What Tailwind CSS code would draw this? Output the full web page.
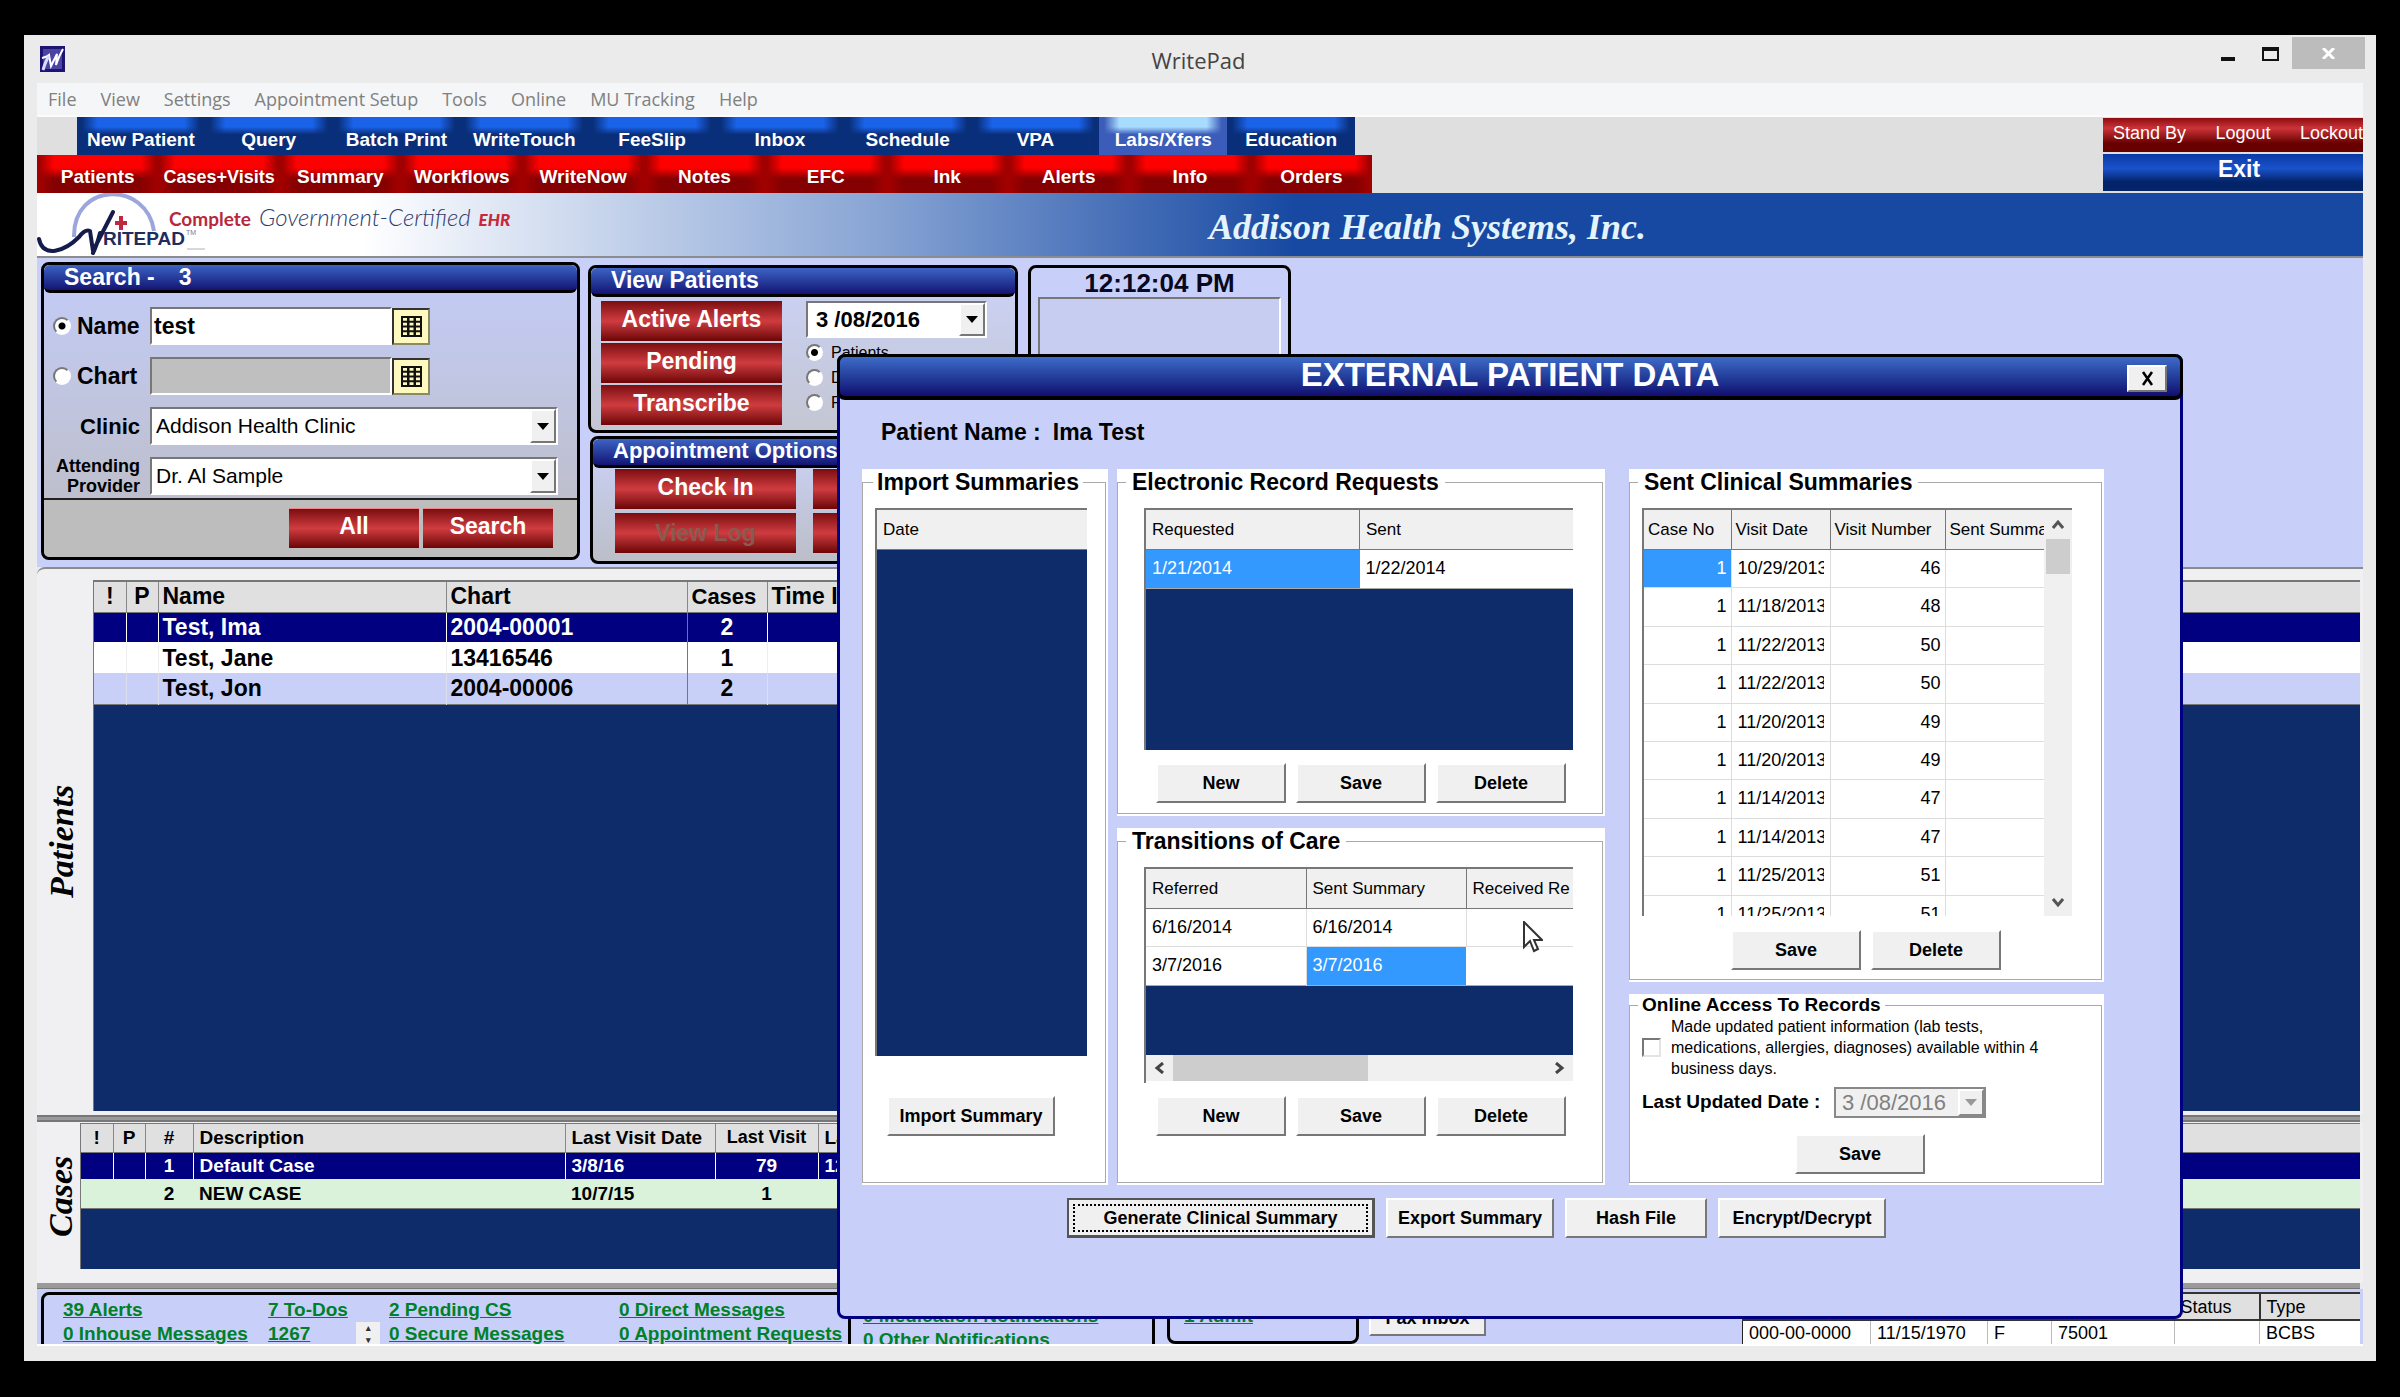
<!DOCTYPE html>
<html lang="en">
<head>
    <meta charset="UTF-8">
    <meta name="viewport" content="width=device-width, initial-scale=1.0">
    <script src="https://cdn.jsdelivr.net/npm/@tailwindcss/browser@4"></script>
    <title>WritePad</title>
</head>
<body class="bg-black font-['Liberation_Sans',sans-serif]">
<div class="h-screen min-h-[1397px] bg-black pl-6 pr-6 pt-[35px] pb-9 overflow-hidden">
<div class="relative h-full bg-[#ebebeb] flex flex-col px-[13px] pb-[15px]">

    <!-- title bar -->
    <header class="h-12 shrink-0 flex justify-between items-start -mr-0.5">
        <div class="flex-1 pl-[3px] pt-[11px]">
            <svg class="w-[25px] h-[26px]" viewBox="0 0 25 26">
                <rect width="25" height="26" fill="#1c1470"/>
                <rect x="3" y="3" width="19" height="20" fill="#4a44a4"/>
                <path d="M2 12 Q7 11 9 9 L11 20 L17 8 L16 19 Q19 10 23 3" fill="none" stroke="#fff" stroke-width="2"/>
                <path d="M3 24 Q6 14 9 10" fill="none" stroke="#dcdcff" stroke-width="3"/>
            </svg>
        </div>
        <h1 class="h-12 flex items-center text-[22px] text-[#444] font-['Open_Sans',sans-serif] pt-0.5 pr-2">WritePad</h1>
        <div class="flex-1 flex justify-end pt-0.5">
            <button aria-label="Minimize" class="w-10 h-8 flex justify-center items-end pb-2"><svg class="w-[14px] h-[4px]"><rect width="14" height="4" fill="#111"/></svg></button>
            <button aria-label="Maximize" class="w-11 h-8 flex justify-center items-end pb-2"><svg class="w-[17px] h-[14px]" viewBox="0 0 17 14"><rect x="1" y="1" width="15" height="12" fill="none" stroke="#111" stroke-width="2"/><rect width="17" height="4" fill="#111"/></svg></button>
            <button aria-label="Close" class="w-[73px] h-8 bg-[#bcbcbc] flex justify-center items-center"><svg class="w-[13px] h-[11px]" viewBox="0 0 13 11"><path d="M1 0 L12 11 M12 0 L1 11" stroke="#fff" stroke-width="3"/></svg></button>
        </div>
    </header>

    <!-- menu -->
    <nav class="h-[34px] shrink-0 bg-[#f5f6f7] border-b-2 border-[#fbfbfb] flex items-center gap-6 pl-[11px] text-[18px] text-[#808080] font-['Open_Sans',sans-serif]">
        <a href="#">File</a>
        <a href="#">View</a>
        <a href="#">Settings</a>
        <a href="#">Appointment Setup</a>
        <a href="#">Tools</a>
        <a href="#">Online</a>
        <a href="#">MU Tracking</a>
        <a href="#">Help</a>
    </nav>

    <!-- toolbars -->
    <div class="h-[76px] shrink-0 bg-[#dfdfdf] flex justify-between text-[19px] font-bold text-white">
        <div>
            <div class="ml-10 w-[1278px] h-[38px] grid grid-cols-10 bg-[#0a2f7a] [text-shadow:1px_2px_1px_#000]">
                <button class="pt-2 bg-[linear-gradient(to_right,#0a2f7a_4%,transparent_16%,transparent_84%,#0a2f7a_96%),linear-gradient(#1a62e8_26%,#0a2f7a_46%)]">New Patient</button>
                <button class="pt-2 bg-[linear-gradient(to_right,#0a2f7a_4%,transparent_16%,transparent_84%,#0a2f7a_96%),linear-gradient(#1a62e8_26%,#0a2f7a_46%)]">Query</button>
                <button class="pt-2 bg-[linear-gradient(to_right,#0a2f7a_4%,transparent_16%,transparent_84%,#0a2f7a_96%),linear-gradient(#1a62e8_26%,#0a2f7a_46%)]">Batch Print</button>
                <button class="pt-2 bg-[linear-gradient(to_right,#0a2f7a_4%,transparent_16%,transparent_84%,#0a2f7a_96%),linear-gradient(#1a62e8_26%,#0a2f7a_46%)]">WriteTouch</button>
                <button class="pt-2 bg-[linear-gradient(to_right,#0a2f7a_4%,transparent_16%,transparent_84%,#0a2f7a_96%),linear-gradient(#1a62e8_26%,#0a2f7a_46%)]">FeeSlip</button>
                <button class="pt-2 bg-[linear-gradient(to_right,#0a2f7a_4%,transparent_16%,transparent_84%,#0a2f7a_96%),linear-gradient(#1a62e8_26%,#0a2f7a_46%)]">Inbox</button>
                <button class="pt-2 bg-[linear-gradient(to_right,#0a2f7a_4%,transparent_16%,transparent_84%,#0a2f7a_96%),linear-gradient(#1a62e8_26%,#0a2f7a_46%)]">Schedule</button>
                <button class="pt-2 bg-[linear-gradient(to_right,#0a2f7a_4%,transparent_16%,transparent_84%,#0a2f7a_96%),linear-gradient(#1a62e8_26%,#0a2f7a_46%)]">VPA</button>
                <button class="pt-2 bg-[linear-gradient(to_right,#3c5cba_4%,transparent_16%,transparent_84%,#3c5cba_96%),linear-gradient(#a8dcff_26%,#3c5cba_46%)]">Labs/Xfers</button>
                <button class="pt-2 bg-[linear-gradient(to_right,#0a2f7a_4%,transparent_16%,transparent_84%,#0a2f7a_96%),linear-gradient(#1a62e8_26%,#0a2f7a_46%)]">Education</button>
            </div>
            <div class="w-[1335px] h-[38px] grid grid-cols-11 bg-[#850000] [text-shadow:1px_2px_1px_#000]">
                <button class="pt-1.5 bg-[linear-gradient(to_right,#a00000_2%,transparent_14%,transparent_86%,#a00000_98%),linear-gradient(#fe0000_34%,#850000_62%)]">Patients</button>
                <button class="pt-1.5 whitespace-nowrap text-[18px] bg-[linear-gradient(to_right,#a00000_2%,transparent_14%,transparent_86%,#a00000_98%),linear-gradient(#fe0000_34%,#850000_62%)]">Cases+Visits</button>
                <button class="pt-1.5 bg-[linear-gradient(to_right,#a00000_2%,transparent_14%,transparent_86%,#a00000_98%),linear-gradient(#fe0000_34%,#850000_62%)]">Summary</button>
                <button class="pt-1.5 bg-[linear-gradient(to_right,#a00000_2%,transparent_14%,transparent_86%,#a00000_98%),linear-gradient(#fe0000_34%,#850000_62%)]">Workflows</button>
                <button class="pt-1.5 bg-[linear-gradient(to_right,#a00000_2%,transparent_14%,transparent_86%,#a00000_98%),linear-gradient(#fe0000_34%,#850000_62%)]">WriteNow</button>
                <button class="pt-1.5 bg-[linear-gradient(to_right,#a00000_2%,transparent_14%,transparent_86%,#a00000_98%),linear-gradient(#fe0000_34%,#850000_62%)]">Notes</button>
                <button class="pt-1.5 bg-[linear-gradient(to_right,#a00000_2%,transparent_14%,transparent_86%,#a00000_98%),linear-gradient(#fe0000_34%,#850000_62%)]">EFC</button>
                <button class="pt-1.5 bg-[linear-gradient(to_right,#a00000_2%,transparent_14%,transparent_86%,#a00000_98%),linear-gradient(#fe0000_34%,#850000_62%)]">Ink</button>
                <button class="pt-1.5 bg-[linear-gradient(to_right,#a00000_2%,transparent_14%,transparent_86%,#a00000_98%),linear-gradient(#fe0000_34%,#850000_62%)]">Alerts</button>
                <button class="pt-1.5 bg-[linear-gradient(to_right,#a00000_2%,transparent_14%,transparent_86%,#a00000_98%),linear-gradient(#fe0000_34%,#850000_62%)]">Info</button>
                <button class="pt-1.5 bg-[linear-gradient(to_right,#a00000_2%,transparent_14%,transparent_86%,#a00000_98%),linear-gradient(#fe0000_34%,#850000_62%)]">Orders</button>
            </div>
        </div>
        <div class="w-[260px] pt-px font-normal">
            <div class="h-[34px] flex justify-between items-center pl-[10px] pb-1 text-[18px] bg-linear-to-b from-[#8d0a10] via-[#cc3338] via-[30%] to-[#690000] to-[75%]">
                <button>Stand By</button>
                <button>Logout</button>
                <button>Lockout</button>
            </div>
            <button class="mt-0.5 w-full h-[37px] pb-2 pl-3 text-[23px] leading-7 font-bold bg-linear-to-b from-[#0b3aa4] via-[#1a52cc] via-[40%] to-[#04246a] to-[75%]">Exit</button>
        </div>
    </div>

    <!-- banner -->
    <div class="h-[65px] shrink-0 flex border-b-2 border-[#8a8d8e] bg-linear-to-r from-white from-[14%] via-[#89a5d4] via-[36%] to-[#1749a2] to-[54%]">
        <svg class="w-[170px] h-[63px] shrink-0" viewBox="0 0 170 63">
            <path d="M37 44 C36 -12 110 -12 117 38" fill="none" stroke="#9aa6dc" stroke-width="4"/>
            <path d="M2 46 C6 66 28 58 42 44 Q48 36 53 38 L56 58 L76 19 M56 60 Q60 52 63 40" fill="none" stroke="#141c4c" stroke-width="4" stroke-linejoin="round" stroke-linecap="round"/>
            <path d="M78 30 H90 M84 23 V37" stroke="#c02840" stroke-width="4"/>
            <text x="66" y="52" font-family="Liberation Sans" font-weight="bold" font-size="19" fill="#202c5c">RITEPAD</text>
            <text x="149" y="42" font-family="Liberation Sans" font-size="7" fill="#7080a8">TM</text>
            <path d="M150 56 H168" stroke="#d8d8d8" stroke-width="2"/>
        </svg>
        <p class="w-[360px] -ml-[38px] pt-2 flex gap-2 whitespace-nowrap items-baseline font-[Lato,sans-serif]">
            <span class="text-[19px] font-bold text-[#b8283c]">Complete</span>
            <span class="text-[24px] leading-8 italic font-light text-[#303c6c]">Government-Certified</span>
            <span class="text-[17px] italic font-black text-[#c82838]">EHR</span>
        </p>
        <p class="ml-[680px] pt-2 whitespace-nowrap font-['Liberation_Serif',serif] italic font-bold text-[36px] leading-[52px] text-[#e4f4ff]">Addison Health Systems, Inc.</p>
    </div>

    <!-- search and options -->
    <div class="h-[309px] shrink-0 bg-[#c8d0fa] flex pl-1 pt-1">
        <form class="w-[539px] h-[298px] border-3 border-black rounded-lg bg-linear-to-b from-[#c4ccf8] to-[#bcbcc2] flex flex-col">
            <h2 class="h-7 shrink-0 border-b-3 border-black rounded-md bg-linear-to-b from-[#3e63c4] to-[#151274] text-white text-[23px] leading-6 font-bold pl-[20px]"><span>Search -</span><span class="ml-6">3</span></h2>
            <div class="flex-1 pt-[14px] pl-[9px] flex flex-col gap-3 text-[23px] font-bold">
                <div class="h-[38px] flex items-center">
                    <input type="radio" name="by" id="by-name" checked class="appearance-none w-[18px] h-[18px] mr-1.5 rounded-full border-2 border-[#777] border-r-white border-b-white bg-white checked:bg-[radial-gradient(circle,#000_3px,#fff_4px)]">
                    <label for="by-name" class="w-[73px]">Name</label>
                    <input type="text" aria-label="Patient name" value="test" class="w-[242px] h-[38px] pl-0.5 bg-white border-2 border-[#777] border-r-white border-b-white">
                    <button type="button" aria-label="Name keypad" class="w-[38px] h-[37px] bg-[#fdf9bf] border-2 border-[#333] border-r-[#8c8a60] border-b-[#8c8a60] flex justify-center items-center">
                        <svg class="w-[21px] h-[21px]" viewBox="0 0 21 21"><rect width="21" height="21" fill="#111"/><path d="M4 1V20M10.500 1V20M17 1V20" stroke="#fdf9bf" stroke-width="4"/><path d="M0 1H21M0 5.750H21M0 10.500H21M0 15.250H21M0 20H21" stroke="#111" stroke-width="2"/></svg>
                    </button>
                </div>
                <div class="h-[38px] flex items-center">
                    <input type="radio" name="by" id="by-chart" class="appearance-none w-[18px] h-[18px] mr-1.5 rounded-full border-2 border-[#777] border-r-white border-b-white bg-white checked:bg-[radial-gradient(circle,#000_3px,#fff_4px)]">
                    <label for="by-chart" class="w-[73px]">Chart</label>
                    <input type="text" aria-label="Chart number" disabled class="w-[242px] h-[38px] bg-[#bfbfbf] border-2 border-[#777] border-r-white border-b-white">
                    <button type="button" aria-label="Chart keypad" class="w-[38px] h-[37px] bg-[#fdf9bf] border-2 border-[#333] border-r-[#8c8a60] border-b-[#8c8a60] flex justify-center items-center">
                        <svg class="w-[21px] h-[21px]" viewBox="0 0 21 21"><rect width="21" height="21" fill="#111"/><path d="M4 1V20M10.500 1V20M17 1V20" stroke="#fdf9bf" stroke-width="4"/><path d="M0 1H21M0 5.750H21M0 10.500H21M0 15.250H21M0 20H21" stroke="#111" stroke-width="2"/></svg>
                    </button>
                </div>
                <div class="h-[38px] flex items-center">
                    <label for="clinic" class="w-[87px] text-right mr-[10px] text-[22px]">Clinic</label>
                    <div class="w-[408px] h-[38px] flex bg-white border-2 border-[#777] border-r-white border-b-white">
                        <select id="clinic" class="flex-1 appearance-none pl-1 font-normal text-[21px]"><option>Addison Health Clinic</option></select>
                        <span class="w-[26px] bg-[#f0f0f0] border-2 border-white border-r-[#777] border-b-[#777] flex justify-center items-center pointer-events-none"><svg class="w-3 h-[7px]" viewBox="0 0 12 7"><path d="M0 0H12L6 7Z"/></svg></span>
                    </div>
                </div>
                <div class="h-[38px] flex items-center">
                    <label for="provider" class="w-[87px] text-right mr-[10px] text-[18px] leading-5">Attending Provider</label>
                    <div class="w-[408px] h-[38px] flex bg-white border-2 border-[#777] border-r-white border-b-white">
                        <select id="provider" class="flex-1 appearance-none pl-1 font-normal text-[21px]"><option>Dr. Al Sample</option></select>
                        <span class="w-[26px] bg-[#f0f0f0] border-2 border-white border-r-[#777] border-b-[#777] flex justify-center items-center pointer-events-none"><svg class="w-3 h-[7px]" viewBox="0 0 12 7"><path d="M0 0H12L6 7Z"/></svg></span>
                    </div>
                </div>
            </div>
            <div class="h-[59px] shrink-0 border-t-2 border-[#222] bg-[#bdbdbd] rounded-b-md flex justify-end gap-1 pt-2 pr-[24px] text-white text-[23px] font-bold">
                <button type="button" class="w-[130px] h-10 pb-1 border-t border-[#e88] bg-linear-to-b from-[#7c0c10] via-[#d03c40] to-[#6c0406]">All</button>
                <button type="submit" class="w-[130px] h-10 pb-1 border-t border-[#e88] bg-linear-to-b from-[#7c0c10] via-[#d03c40] to-[#6c0406]">Search</button>
            </div>
        </form>

        <div class="ml-2 mt-[3px] flex flex-col gap-[3px]">
            <section class="w-[430px] h-[168px] border-3 border-black rounded-lg bg-linear-to-b from-[#cbd2f8] to-[#c4c6d2]">
                <h2 class="h-[29px] border-b-3 border-black rounded-md bg-linear-to-b from-[#3e63c4] to-[#151274] text-white text-[23px] leading-6 font-bold pl-[20px]">View Patients</h2>
                <div class="flex pt-1 pl-[10px]">
                    <div class="w-[181px] flex flex-col gap-[2px] text-white text-[23px] font-bold">
                        <button class="h-10 pb-1 bg-linear-to-b from-[#7c0c10] via-[#d03c40] to-[#6c0406]">Active Alerts</button>
                        <button class="h-10 pb-1 bg-linear-to-b from-[#7c0c10] via-[#d03c40] to-[#6c0406]">Pending</button>
                        <button class="h-10 pb-1 bg-linear-to-b from-[#7c0c10] via-[#d03c40] to-[#6c0406]">Transcribe</button>
                    </div>
                    <div class="ml-[24px] text-[16px]">
                        <div class="w-[181px] h-[37px] flex bg-white border-2 border-[#777] border-r-white border-b-white">
                            <select aria-label="Date" class="flex-1 appearance-none pl-2 font-bold text-[22px]"><option>3 /08/2016</option></select>
                            <span class="w-[26px] bg-[#f0f0f0] border-2 border-white border-r-[#777] border-b-[#777] flex justify-center items-center pointer-events-none"><svg class="w-3 h-[7px]" viewBox="0 0 12 7"><path d="M0 0H12L6 7Z"/></svg></span>
                        </div>
                        <label class="mt-0.5 h-[25px] flex items-center gap-2"><input type="radio" name="view" checked class="appearance-none w-[17px] h-[17px] rounded-full border-2 border-[#777] border-r-white border-b-white bg-white checked:bg-[radial-gradient(circle,#000_3px,#fff_4px)]">Patients</label>
                        <label class="h-[25px] flex items-center gap-2"><input type="radio" name="view" class="appearance-none w-[17px] h-[17px] rounded-full border-2 border-[#777] border-r-white border-b-white bg-white">D</label>
                        <label class="h-[25px] flex items-center gap-2"><input type="radio" name="view" class="appearance-none w-[17px] h-[17px] rounded-full border-2 border-[#777] border-r-white border-b-white bg-white">P</label>
                    </div>
                </div>
            </section>
            <section class="ml-0.5 w-[430px] h-[128px] border-3 border-black rounded-lg bg-linear-to-b from-[#cbd2f8] to-[#bcbec8]">
                <h2 class="h-[29px] border-b-3 border-black rounded-md bg-linear-to-b from-[#3e63c4] to-[#151274] text-white text-[22px] leading-6 font-bold pl-[20px]">Appointment Options</h2>
                <div class="grid grid-cols-[181px_181px] gap-x-[17px] gap-y-1 pt-px pl-[22px] text-white text-[23px] font-bold">
                    <button class="h-10 pb-1 bg-linear-to-b from-[#7c0c10] via-[#d03c40] to-[#6c0406]">Check In</button>
                    <button aria-label="Check out" class="h-10 bg-linear-to-b from-[#7c0c10] via-[#d03c40] to-[#6c0406]"></button>
                    <button disabled class="h-10 text-[#8a5a50] bg-linear-to-b from-[#7c0c10] via-[#d03c40] to-[#6c0406]">View Log</button>
                    <button aria-label="Schedule" class="h-10 bg-linear-to-b from-[#7c0c10] via-[#d03c40] to-[#6c0406]"></button>
                </div>
            </section>
        </div>

        <section class="ml-2 mt-[3px] w-[263px] h-[240px] border-3 border-black rounded-lg flex flex-col px-[7px] pb-2">
            <p class="h-[29px] text-center text-[26px] leading-[30px] font-bold text-[#080820]">12:12:04 PM</p>
            <div class="flex-1 bg-[#c6cdf0] border-2 border-[#777] border-r-white border-b-white"></div>
        </section>
    </div>

    <!-- patients -->
    <section class="flex-1 min-h-0 border-t-2 border-[#8c8c8c] rounded-tl-lg bg-[#f0f0f3] flex pt-[11px] pr-[3px] pb-1">
        <h2 class="w-14 flex items-center justify-center [writing-mode:vertical-rl] rotate-180 pl-2 pt-2 font-['Liberation_Serif',serif] italic font-bold text-[34px]">Patients</h2>
        <div class="flex-1 bg-[#0e2c6a] border-t-2 border-l border-[#777]">
            <table class="w-full table-fixed text-[23px] font-bold text-left">
                <colgroup><col class="w-[32px]"><col class="w-[32px]"><col class="w-[288px]"><col class="w-[241px]"><col class="w-[80px]"><col></colgroup>
                <thead class="bg-[#e0e0e0]">
                    <tr class="h-[30px] border-b border-[#777] leading-[29px]">
                        <th class="text-center border-r border-[#888]">!</th>
                        <th class="text-center border-r border-[#888]">P</th>
                        <th class="pl-1 border-r border-[#888]">Name</th>
                        <th class="pl-1 border-r border-[#888]">Chart</th>
                        <th class="pl-1 border-r border-[#888] text-[22px]">Cases</th>
                        <th class="pl-1">Time In</th>
                    </tr>
                </thead>
                <tbody>
                    <tr class="h-[30px] leading-[29px] bg-[#000080] text-white"><td class="border-r border-white"></td><td class="border-r border-white"></td><td class="pl-1 border-r border-white">Test, Ima</td><td class="pl-1 border-r border-[#777]">2004-00001</td><td class="text-center border-r border-white">2</td><td></td></tr>
                    <tr class="h-[31px] leading-[30px] bg-white"><td class="border-r border-[#eee]"></td><td class="border-r border-[#eee]"></td><td class="pl-1 border-r border-[#eee]">Test, Jane</td><td class="pl-1 border-r border-[#777]">13416546</td><td class="text-center border-r border-[#eee]">1</td><td></td></tr>
                    <tr class="h-[31px] leading-[30px] bg-[#c8d0f8] border-b border-[#777]"><td class="border-r border-[#dde]"></td><td class="border-r border-[#dde]"></td><td class="pl-1 border-r border-[#dde]">Test, Jon</td><td class="pl-1 border-r border-[#777]">2004-00006</td><td class="text-center border-r border-[#dde]">2</td><td></td></tr>
                </tbody>
            </table>
        </div>
    </section>
    <div class="h-[7px] shrink-0 mr-[3px] bg-[#9a9a9a] border-y-2 border-[#777]"></div>

    <!-- cases -->
    <section class="h-[161px] shrink-0 bg-[#f0f0f3] flex pt-px pr-[3px] pb-[14px]">
        <h2 class="w-[43px] flex items-center justify-center [writing-mode:vertical-rl] rotate-180 pr-1 font-['Liberation_Serif',serif] italic font-bold text-[34px]">Cases</h2>
        <div class="flex-1 bg-[#0e2c6a] border-t border-l border-[#777]">
            <table class="w-full table-fixed text-[19px] font-bold text-left">
                <colgroup><col class="w-[32px]"><col class="w-[32px]"><col class="w-[48px]"><col class="w-[372px]"><col class="w-[150px]"><col class="w-[103px]"><col></colgroup>
                <thead class="bg-[#e0e0e0]">
                    <tr class="h-[28px] border-b border-[#777] leading-[27px]">
                        <th class="text-center border-r border-[#888]">!</th>
                        <th class="text-center border-r border-[#888]">P</th>
                        <th class="text-center border-r border-[#888]">#</th>
                        <th class="pl-1.5 border-r border-[#888]">Description</th>
                        <th class="pl-1.5 border-r border-[#888]">Last Visit Date</th>
                        <th class="text-[18px] text-center border-r border-[#888]">Last Visit</th>
                        <th class="pl-1.5">Last Note</th>
                    </tr>
                </thead>
                <tbody>
                    <tr class="h-[27px] leading-[26px] bg-[#000080] text-white"><td class="border-r border-white"></td><td class="border-r border-white"></td><td class="text-center border-r border-white">1</td><td class="pl-1.5 border-r border-white">Default Case</td><td class="pl-1.5 border-r border-white">3/8/16</td><td class="text-center border-r border-white">79</td><td class="pl-1.5">12/3/15</td></tr>
                    <tr class="h-[29px] leading-[27px] bg-[#daf1da] border-b border-[#777]"><td></td><td></td><td class="text-center">2</td><td class="pl-1.5">NEW CASE</td><td class="pl-1.5">10/7/15</td><td class="text-center">1</td><td></td></tr>
                </tbody>
            </table>
        </div>
    </section>
    <div class="h-1.5 shrink-0 mr-[3px] bg-[#9a9a9a] border-b border-[#777]"></div>

    <!-- status links -->
    <footer class="h-[57px] shrink-0 overflow-hidden bg-[#c8d0fa] border-b-2 border-white pt-[3px] pl-1 pr-[3px] flex items-start text-[19px] leading-6 font-bold text-[#008028]">
        <div class="w-[810px] h-[70px] shrink-0 border-3 border-black rounded-lg pl-[19px] pt-[3px] grid grid-cols-[205px_121px_230px_1fr] content-start whitespace-nowrap">
            <a href="#" class="underline">39 Alerts</a>
            <a href="#" class="underline">7 To-Dos</a>
            <a href="#" class="underline">2 Pending CS</a>
            <a href="#" class="underline">0 Direct Messages</a>
            <a href="#" class="underline">0 Inhouse Messages</a>
            <div class="flex"><a href="#" class="underline">1267</a><span class="ml-[46px] w-6 bg-[#f0f0f0] text-[#333] text-[9px] leading-3 text-center">▴<br>▾</span></div>
            <a href="#" class="underline">0 Secure Messages</a>
            <a href="#" class="underline">0 Appointment Requests</a>
        </div>
        <div class="w-[304px] h-[70px] shrink-0 border-r-3 border-black pl-[12px] pt-3 leading-6">
            <a href="#" class="block underline">0 Medication Notifications</a>
            <a href="#" class="block underline">0 Other Notifications</a>
        </div>
        <div class="ml-3 w-[192px] h-[52px] shrink-0 border-3 border-black rounded-lg pl-[14px] pt-[9px]">
            <a href="#" class="underline">1 Admit</a>
        </div>
        <button class="ml-[10px] w-[117px] h-10 mt-1 shrink-0 pt-1 text-black text-[18px] bg-[#f0f0f0] border-2 border-white border-r-[#777] border-b-[#777]">Fax Inbox</button>
        <div class="flex-1"></div>
        <table class="w-[618px] table-fixed text-left text-[18px] leading-6 font-normal text-black bg-white border-b-2 border-l border-[#222]">
            <colgroup><col class="w-[128px]"><col class="w-[117px]"><col class="w-[64px]"><col class="w-[123px]"><col class="w-[85px]"><col></colgroup>
            <thead class="bg-[#e0e0e0]"><tr class="h-[27px] border-y-2 border-[#333]"><th class="pl-1.5 font-normal">SSN</th><th class="pl-1.5 font-normal">DOB</th><th class="pl-1.5 font-normal">Sex</th><th class="pl-1.5 font-normal">Zip</th><th class="pl-1.5 font-normal border-r-2 border-[#333]">Status</th><th class="pl-1.5 font-normal">Type</th></tr></thead>
            <tbody><tr><td class="pl-1.5 border-r border-[#bbb]">000-00-0000</td><td class="pl-1.5 border-r border-[#bbb]">11/15/1970</td><td class="pl-1.5 border-r border-[#bbb]">F</td><td class="pl-1.5 border-r border-[#bbb]">75001</td><td class="border-r border-[#bbb]"></td><td class="pl-1.5">BCBS</td></tr></tbody>
        </table>
    </footer>

    <!-- external patient data window -->
    <section role="dialog" aria-labelledby="dialog-title" class="absolute left-[813px] top-[319px] w-[1346px] h-[965px] bg-[#c8d0fa] border-3 border-t-0 border-[#000080] rounded-lg flex flex-col">
        <header class="h-[46px] shrink-0 -mx-[3px] border-3 border-b-4 border-black rounded-lg bg-linear-to-b from-[#3e6cc8] to-[#130a70] flex justify-center relative">
            <h2 id="dialog-title" class="text-white text-[33px] leading-[35px] font-bold">EXTERNAL PATIENT DATA</h2>
            <button aria-label="Close window" class="absolute right-[13px] top-2 w-[40px] h-[27px] bg-[#f0f0f0] border-2 border-white border-r-[#777] border-b-[#777] flex justify-center items-center"><svg class="w-[13px] h-[15px]" viewBox="0 0 13 15"><path d="M2 1 L11 14 M11 1 L2 14" stroke="#000" stroke-width="2.500"/></svg></button>
        </header>
        <p class="h-[69px] shrink-0 pl-[41px] pt-4 text-[23px] leading-8 font-bold"><span>Patient Name :</span><span class="ml-3">Ima Test</span></p>

        <div class="h-[716px] shrink-0 flex pl-[22px]">
            <div class="w-[246px] bg-white pr-0.5 pb-0.5 flex">
                <fieldset class="flex-1 min-w-0 h-full border border-[#aaa] px-3 pt-[13px]">
                    <legend class="px-1 -ml-0.5 text-[23px] leading-[26px] font-bold">Import Summaries</legend>
                    <div class="w-[212px] h-[548px] bg-[#0e2c6a] border-t-2 border-l-2 border-[#777]">
                        <table class="w-full text-left text-[17px]"><thead><tr class="h-[39px] bg-[#f0f0f0] border-b border-[#777]"><th class="pl-1.5 font-normal">Date</th></tr></thead></table>
                    </div>
                    <button class="mt-[40px] ml-3 w-[168px] h-10 text-[18px] font-bold whitespace-nowrap bg-[#f0f0f0] border-2 border-white border-r-[#777] border-b-[#777]">Import Summary</button>
                </fieldset>
            </div>

            <div class="ml-[9px] w-[488px] flex flex-col gap-3">
                <div class="h-[347px] bg-white pr-0.5 pb-0.5">
                    <fieldset class="min-w-0 h-full border border-[#aaa] pl-[26px] pt-[13px]">
                        <legend class="px-1.5 -ml-[18px] text-[23px] leading-[26px] font-bold">Electronic Record Requests</legend>
                        <div class="w-[429px] h-[242px] bg-[#0e2c6a] border-t-2 border-l-2 border-[#777]">
                            <table class="w-full table-fixed text-left text-[18px]">
                                <colgroup><col class="w-1/2"><col class="w-1/2"></colgroup>
                                <thead><tr class="h-[39px] bg-[#f0f0f0] border-b border-[#777] text-[17px]"><th class="pl-1.5 font-normal border-r border-[#777]">Requested</th><th class="pl-1.5 font-normal">Sent</th></tr></thead>
                                <tbody><tr class="h-[39px] bg-white border-b border-[#aaa]"><td class="pl-1.5 bg-[#3399ff] text-white">1/21/2014</td><td class="pl-1.5">1/22/2014</td></tr></tbody>
                            </table>
                        </div>
                        <div class="mt-[13px] ml-3 flex gap-[10px] text-[18px] font-bold">
                            <button class="w-[130px] h-10 bg-[#f0f0f0] border-2 border-white border-r-[#777] border-b-[#777]">New</button>
                            <button class="w-[130px] h-10 bg-[#f0f0f0] border-2 border-white border-r-[#777] border-b-[#777]">Save</button>
                            <button class="w-[130px] h-10 bg-[#f0f0f0] border-2 border-white border-r-[#777] border-b-[#777]">Delete</button>
                        </div>
                    </fieldset>
                </div>
                <div class="flex-1 bg-white pr-0.5 pb-0.5">
                    <fieldset class="min-w-0 h-full border border-[#aaa] pl-[26px] pt-[13px]">
                        <legend class="px-1.5 -ml-[18px] text-[23px] leading-[26px] font-bold">Transitions of Care</legend>
                        <div class="w-[429px] h-[216px] overflow-hidden bg-[#0e2c6a] border-t-2 border-l-2 border-[#777] flex flex-col justify-between">
                            <table class="w-full table-fixed text-left text-[18px]">
                                <colgroup><col class="w-[160px]"><col class="w-[160px]"><col></colgroup>
                                <thead><tr class="h-[39px] bg-[#f0f0f0] border-b border-[#777] text-[17px]"><th class="pl-1.5 font-normal border-r border-[#777]">Referred</th><th class="pl-1.5 font-normal border-r border-[#777]">Sent Summary</th><th class="pl-1.5 font-normal whitespace-nowrap overflow-hidden">Received Re</th></tr></thead>
                                <tbody>
                                    <tr class="h-[38px] bg-white border-b border-[#ddd]"><td class="pl-1.5 border-r border-[#ddd]">6/16/2014</td><td class="pl-1.5 border-r border-[#ddd]">6/16/2014</td><td></td></tr>
                                    <tr class="h-[39px] bg-white border-b border-[#aaa]"><td class="pl-1.5 border-r border-[#ddd]">3/7/2016</td><td class="pl-1.5 bg-[#3399ff] text-white">3/7/2016</td><td></td></tr>
                                </tbody>
                            </table>
                            <div class="h-[28px] bg-[#f0f0f0] border-b-2 border-white flex items-center">
                                <svg class="w-[27px] h-3" viewBox="0 0 27 12"><path d="M17 1 L11 6 L17 11" fill="none" stroke="#444" stroke-width="3"/></svg>
                                <div class="w-[195px] h-full bg-[#cdcdcd]"></div>
                                <svg class="w-[27px] h-3 ml-auto" viewBox="0 0 27 12"><path d="M10 1 L16 6 L10 11" fill="none" stroke="#444" stroke-width="3"/></svg>
                            </div>
                        </div>
                        <div class="mt-[13px] ml-3 flex gap-[10px] text-[18px] font-bold">
                            <button class="w-[130px] h-10 bg-[#f0f0f0] border-2 border-white border-r-[#777] border-b-[#777]">New</button>
                            <button class="w-[130px] h-10 bg-[#f0f0f0] border-2 border-white border-r-[#777] border-b-[#777]">Save</button>
                            <button class="w-[130px] h-10 bg-[#f0f0f0] border-2 border-white border-r-[#777] border-b-[#777]">Delete</button>
                        </div>
                    </fieldset>
                </div>
            </div>

            <div class="ml-[24px] w-[475px] flex flex-col gap-3">
                <div class="h-[513px] bg-white pr-0.5 pb-0.5">
                    <fieldset class="min-w-0 h-full border border-[#aaa] pl-3 pt-[13px]">
                        <legend class="px-1.5 -ml-1 text-[23px] leading-[26px] font-bold">Sent Clinical Summaries</legend>
                        <div class="w-[430px] h-[408px] overflow-hidden border-t-2 border-l-2 border-[#777] flex">
                            <table class="w-[400px] shrink-0 table-fixed text-[18px]">
                                <colgroup><col class="w-[87px]"><col class="w-[99px]"><col class="w-[115px]"><col></colgroup>
                                <thead><tr class="h-[39px] bg-[#f0f0f0] border-b border-[#777] text-[17px] text-left whitespace-nowrap"><th class="pl-1 font-normal border-r border-[#777]">Case No</th><th class="pl-1 font-normal border-r border-[#777]">Visit Date</th><th class="pl-1 font-normal border-r border-[#777]">Visit Number</th><th class="pl-1 font-normal overflow-hidden">Sent Summary</th></tr></thead>
                                <tbody class="text-right">
                                    <tr class="h-[38px] border-b border-[#ddd]"><td class="pr-1 border-r border-[#ddd] bg-[#3399ff] text-white">1</td><td class="px-1.5 border-r border-[#ddd] text-left"><div class="overflow-hidden">10/29/2013</div></td><td class="pr-1 border-r border-[#ddd]">46</td><td></td></tr>
                                    <tr class="h-[39px] border-b border-[#ddd]"><td class="pr-1 border-r border-[#ddd]">1</td><td class="px-1.5 border-r border-[#ddd] text-left"><div class="overflow-hidden">11/18/2013</div></td><td class="pr-1 border-r border-[#ddd]">48</td><td></td></tr>
                                    <tr class="h-[38px] border-b border-[#ddd]"><td class="pr-1 border-r border-[#ddd]">1</td><td class="px-1.5 border-r border-[#ddd] text-left"><div class="overflow-hidden">11/22/2013</div></td><td class="pr-1 border-r border-[#ddd]">50</td><td></td></tr>
                                    <tr class="h-[39px] border-b border-[#ddd]"><td class="pr-1 border-r border-[#ddd]">1</td><td class="px-1.5 border-r border-[#ddd] text-left"><div class="overflow-hidden">11/22/2013</div></td><td class="pr-1 border-r border-[#ddd]">50</td><td></td></tr>
                                    <tr class="h-[38px] border-b border-[#ddd]"><td class="pr-1 border-r border-[#ddd]">1</td><td class="px-1.5 border-r border-[#ddd] text-left"><div class="overflow-hidden">11/20/2013</div></td><td class="pr-1 border-r border-[#ddd]">49</td><td></td></tr>
                                    <tr class="h-[38px] border-b border-[#ddd]"><td class="pr-1 border-r border-[#ddd]">1</td><td class="px-1.5 border-r border-[#ddd] text-left"><div class="overflow-hidden">11/20/2013</div></td><td class="pr-1 border-r border-[#ddd]">49</td><td></td></tr>
                                    <tr class="h-[39px] border-b border-[#ddd]"><td class="pr-1 border-r border-[#ddd]">1</td><td class="px-1.5 border-r border-[#ddd] text-left"><div class="overflow-hidden">11/14/2013</div></td><td class="pr-1 border-r border-[#ddd]">47</td><td></td></tr>
                                    <tr class="h-[38px] border-b border-[#ddd]"><td class="pr-1 border-r border-[#ddd]">1</td><td class="px-1.5 border-r border-[#ddd] text-left"><div class="overflow-hidden">11/14/2013</div></td><td class="pr-1 border-r border-[#ddd]">47</td><td></td></tr>
                                    <tr class="h-[39px] border-b border-[#ddd]"><td class="pr-1 border-r border-[#ddd]">1</td><td class="px-1.5 border-r border-[#ddd] text-left"><div class="overflow-hidden">11/25/2013</div></td><td class="pr-1 border-r border-[#ddd]">51</td><td></td></tr>
                                    <tr class="h-[38px] border-b border-[#ddd]"><td class="pr-1 border-r border-[#ddd]">1</td><td class="px-1.5 border-r border-[#ddd] text-left"><div class="overflow-hidden">11/25/2013</div></td><td class="pr-1 border-r border-[#ddd]">51</td><td></td></tr>
                                </tbody>
                            </table>
                            <div class="flex-1 bg-[#f0f0f0] flex flex-col items-center">
                                <svg class="w-3 h-[29px] shrink-0" viewBox="0 0 12 29"><path d="M1 18 L6 12 L11 18" fill="none" stroke="#555" stroke-width="3"/></svg>
                                <div class="w-6 h-[35px] shrink-0 bg-[#cdcdcd]"></div>
                                <svg class="w-3 h-[25px] mt-auto" viewBox="0 0 12 25"><path d="M1 8 L6 14 L11 8" fill="none" stroke="#555" stroke-width="3"/></svg>
                            </div>
                        </div>
                        <div class="mt-[14px] ml-[89px] flex gap-[10px] text-[18px] font-bold">
                            <button class="w-[130px] h-10 bg-[#f0f0f0] border-2 border-white border-r-[#777] border-b-[#777]">Save</button>
                            <button class="w-[130px] h-10 bg-[#f0f0f0] border-2 border-white border-r-[#777] border-b-[#777]">Delete</button>
                        </div>
                    </fieldset>
                </div>
                <div class="flex-1 bg-white pr-0.5 pb-0.5">
                    <fieldset class="min-w-0 h-full border border-[#aaa] pl-3">
                        <legend class="px-1 -ml-1 text-[19px] leading-[22px] font-bold">Online Access To Records</legend>
                        <div class="flex items-center text-[16px] leading-[21px]">
                            <input type="checkbox" id="online" class="appearance-none w-[19px] h-[19px] mr-[10px] shrink-0 bg-white border-2 border-[#777] border-r-[#e4e4e4] border-b-[#e4e4e4]">
                            <label for="online" class="w-[395px]">Made updated patient information (lab tests, medications, allergies, diagnoses) available within 4 business days.</label>
                        </div>
                        <div class="mt-2 flex items-center">
                            <label for="updated" class="w-[192px] whitespace-nowrap text-[19px] font-bold">Last Updated Date :</label>
                            <div class="w-[152px] h-[31px] flex bg-[#f0f0f0] border-2 border-[#888]">
                                <select id="updated" disabled class="flex-1 appearance-none pl-1.5 text-[22px] leading-[27px] text-[#808080]"><option>3 /08/2016</option></select>
                                <span class="w-[26px] border-2 border-white border-r-[#888] border-b-[#888] flex justify-center items-center pointer-events-none"><svg class="w-3 h-[7px]" viewBox="0 0 12 7"><path d="M0 0H12L6 7Z" fill="#999"/></svg></span>
                            </div>
                        </div>
                        <button class="mt-4 ml-[153px] w-[130px] h-10 text-[18px] font-bold bg-[#f0f0f0] border-2 border-white border-r-[#777] border-b-[#777]">Save</button>
                    </fieldset>
                </div>
            </div>
        </div>

        <div class="mt-[13px] pl-[227px] flex gap-[11px] text-[18px] font-bold whitespace-nowrap">
            <button class="w-[308px] h-10 p-1 bg-[#f0f0f0] border-2 border-[#555] border-b-3 border-r-3"><span class="block border-2 border-dotted border-black leading-6">Generate Clinical Summary</span></button>
            <button class="w-[168px] h-10 bg-[#f0f0f0] border-2 border-white border-r-[#777] border-b-[#777]">Export Summary</button>
            <button class="w-[142px] h-10 bg-[#f0f0f0] border-2 border-white border-r-[#777] border-b-[#777]">Hash File</button>
            <button class="w-[168px] h-10 bg-[#f0f0f0] border-2 border-white border-r-[#777] border-b-[#777]">Encrypt/Decrypt</button>
        </div>

        <!-- mouse pointer -->
        <svg class="absolute left-[683px] top-[567px] w-5 h-8" viewBox="0 0 20 32"><path d="M1 1 V26 L7 20 L11 30 L15 28 L11 19 H19 Z" fill="#fff" stroke="#333" stroke-width="2"/></svg>
    </section>
</div>
</div>
</body>
</html>
